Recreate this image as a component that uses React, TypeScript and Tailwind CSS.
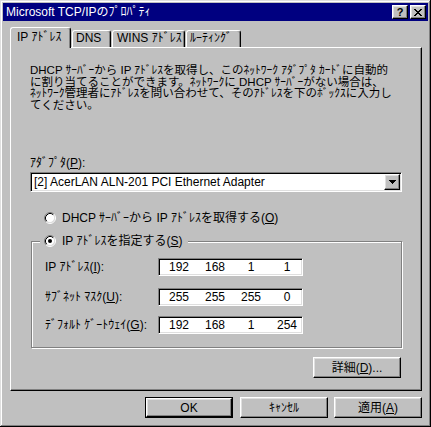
import React from "react";

const U = ({ c }: { c: string }) => <span className="underline underline-offset-[1px]">{c}</span>;

function Radio({ checked }: { checked?: boolean }) {
  return (
    <svg width="12" height="12" viewBox="0 0 12 12" className="shrink-0">
      <circle cx="6" cy="6" r="4.5" fill="#fff" />
      <path d="M2.11 9.89 A5.5 5.5 0 0 1 9.89 2.11" stroke="#808080" fill="none" />
      <path d="M9.89 2.11 A5.5 5.5 0 0 1 2.11 9.89" stroke="#fff" fill="none" />
      <path d="M2.82 9.18 A4.5 4.5 0 0 1 9.18 2.82" stroke="#000" fill="none" />
      <path d="M9.18 2.82 A4.5 4.5 0 0 1 2.82 9.18" stroke="#dfdfdf" fill="none" />
      {checked && <circle cx="6" cy="6" r="2" fill="#000" />}
    </svg>
  );
}

function Btn({ children, className }: { children: React.ReactNode; className?: string }) {
  return (
    <div
      className={
        "flex items-center justify-center bg-[#c0c0c0] border border-t-white border-l-white border-b-black border-r-black shadow-[inset_-1px_-1px_0_#808080,inset_1px_1px_0_#dfdfdf] whitespace-nowrap " +
        (className ?? "")
      }
    >
      {children}
    </div>
  );
}

function IpField({ v }: { v: string[] }) {
  return (
    <div className="w-[145px] h-[18px] bg-white border border-t-[#808080] border-l-[#808080] border-b-white border-r-white shadow-[inset_1px_1px_0_#000,inset_-1px_-1px_0_#dfdfdf] flex items-center pl-[2px] overflow-hidden">
      {v.map((n, i) => (
        <span key={i} className="w-[36px] shrink-0 text-center">
          {n}
        </span>
      ))}
    </div>
  );
}

export default function App() {
  return (
    <div className="w-[431px] h-[427px] bg-[#c0c0c0] p-[3px] flex flex-col font-['Liberation_Sans','Noto_Sans_CJK_JP',sans-serif] text-[12px] leading-[12px] text-black shadow-[inset_-1px_-1px_0_#000,inset_1px_1px_0_#dfdfdf,inset_-2px_-2px_0_#808080,inset_2px_2px_0_#fff] overflow-hidden">
      {/* title bar */}
      <div className="h-[18px] shrink-0 bg-[#000080] flex items-center pl-[3px] pr-[2px]">
        <span className="text-white flex-1 whitespace-nowrap">Microsoft TCP/IPのﾌﾟﾛﾊﾟﾃｨ</span>
        <div className="flex gap-[2px]">
          <Btn className="w-[16px] h-[14px] text-[11px] font-bold leading-[11px]">?</Btn>
          <Btn className="w-[16px] h-[14px]">
            <svg width="8" height="7" viewBox="0 0 8 7">
              <path
                fill="#000"
                d="M0 0h2v1H0z M6 0h2v1H6z M1 1h2v1H1z M5 1h2v1H5z M2 2h4v1H2z M3 3h2v1H3z M2 4h4v1H2z M1 5h2v1H1z M5 5h2v1H5z M0 6h2v1H0z M6 6h2v1H6z"
              />
            </svg>
          </Btn>
        </div>
      </div>

      <div className="mt-[6px] ml-[7px] w-[412px] flex flex-col">
        {/* tabs */}
        <div className="relative z-10 flex items-end h-[20px] whitespace-nowrap">
          <div className="h-[21px] -mb-[1px] w-[61px] bg-[#c0c0c0] border-t border-l border-r border-t-white border-l-white border-r-black rounded-t-[3px] shadow-[inset_-1px_0_0_#808080] pl-[6px] pt-[3px]">
            IP ｱﾄﾞﾚｽ
          </div>
          <div className="ml-[1px] h-[17px] w-[39px] border-t border-l border-r border-t-white border-l-white border-r-black rounded-t-[3px] shadow-[inset_-1px_0_0_#808080] pl-[3px] pt-[1px]">
            DNS
          </div>
          <div className="ml-[1px] h-[17px] w-[73px] border-t border-l border-r border-t-white border-l-white border-r-black rounded-t-[3px] shadow-[inset_-1px_0_0_#808080] pl-[4px] pt-[1px]">
            WINS ｱﾄﾞﾚｽ
          </div>
          <div className="ml-[1px] h-[17px] w-[55px] border-t border-l border-r border-t-white border-l-white border-r-black rounded-t-[3px] shadow-[inset_-1px_0_0_#808080] pl-[3px] pt-[1px]">
            ﾙｰﾃｨﾝｸﾞ
          </div>
        </div>

        {/* panel */}
        <div className="h-[344px] border border-t-white border-l-white border-r-black border-b-black shadow-[inset_-1px_-1px_0_#808080] flex flex-col pt-[17px] px-[19px]">
          <div className="text-[11.5px] leading-[11.5px] whitespace-nowrap">
            <div>DHCP ｻｰﾊﾞｰから IP ｱﾄﾞﾚｽを取得し、このﾈｯﾄﾜｰｸ ｱﾀﾞﾌﾟﾀ ｶｰﾄﾞに自動的</div>
            <div>に割り当てることができます。ﾈｯﾄﾜｰｸに DHCP ｻｰﾊﾞｰがない場合は、</div>
            <div>ﾈｯﾄﾜｰｸ管理者にｱﾄﾞﾚｽを問い合わせて、そのｱﾄﾞﾚｽを下のﾎﾞｯｸｽに入力し</div>
            <div>てください。</div>
          </div>

          <div className="mt-[46px] whitespace-nowrap">
            ｱﾀﾞﾌﾟﾀ(<U c="P" />):
          </div>

          <div className="mt-[3px] h-[20px] w-full bg-white border border-t-[#808080] border-l-[#808080] border-b-white border-r-white shadow-[inset_1px_1px_0_#000,inset_-1px_-1px_0_#dfdfdf] flex items-center pl-[3px] pr-[1px]">
            <span className="flex-1 whitespace-nowrap">[2] AcerLAN ALN-201 PCI Ethernet Adapter</span>
            <Btn className="w-[16px] h-[16px]">
              <svg width="7" height="4" viewBox="0 0 7 4">
                <path fill="#000" d="M0 0h7v1H0z M1 1h5v1H1z M2 2h3v1H2z M3 3h1v1H3z" />
              </svg>
            </Btn>
          </div>

          <div className="mt-[20px] ml-[14px] h-[12px] flex items-center gap-[6px] whitespace-nowrap">
            <Radio />
            <span>
              DHCP ｻｰﾊﾞｰから IP ｱﾄﾞﾚｽを取得する(<U c="O" />)
            </span>
          </div>

          <div className="relative mt-[17px] ml-[1px] h-[107px] border border-[#808080] shadow-[inset_1px_1px_0_#fff,1px_1px_0_#fff] flex flex-col pt-[16px] pl-[13px]">
            <div className="absolute left-[8px] -top-[7px] h-[12px] bg-[#c0c0c0] pl-[4px] pr-[6px] flex items-center gap-[6px] whitespace-nowrap">
              <Radio checked />
              <span>
                IP ｱﾄﾞﾚｽを指定する(<U c="S" />)
              </span>
            </div>

            <div className="flex items-center h-[18px]">
              <span className="w-[113px] whitespace-nowrap">
                IP ｱﾄﾞﾚｽ(<U c="I" />):
              </span>
              <IpField v={["192", "168", "1", "1"]} />
            </div>
            <div className="mt-[12px] flex items-center h-[18px]">
              <span className="w-[113px] whitespace-nowrap">
                ｻﾌﾞﾈｯﾄ ﾏｽｸ(<U c="U" />):
              </span>
              <IpField v={["255", "255", "255", "0"]} />
            </div>
            <div className="mt-[10px] flex items-center h-[18px]">
              <span className="w-[113px] whitespace-nowrap">
                ﾃﾞﾌｫﾙﾄ ｹﾞｰﾄｳｪｲ(<U c="G" />):
              </span>
              <IpField v={["192", "168", "1", "254"]} />
            </div>
          </div>

          <Btn className="mt-[9px] self-end mr-[1px] w-[88px] h-[21px]">
            詳細(<U c="D" />)...
          </Btn>
        </div>

        {/* bottom buttons */}
        <div className="mt-[6px] flex justify-end">
          <div className="w-[88px] h-[21px] border border-black flex">
            <Btn className="flex-1">OK</Btn>
          </div>
          <Btn className="ml-[7px] w-[88px] h-[21px]">ｷｬﾝｾﾙ</Btn>
          <Btn className="ml-[6px] w-[88px] h-[21px]">
            適用(<U c="A" />)
          </Btn>
        </div>
      </div>
    </div>
  );
}
